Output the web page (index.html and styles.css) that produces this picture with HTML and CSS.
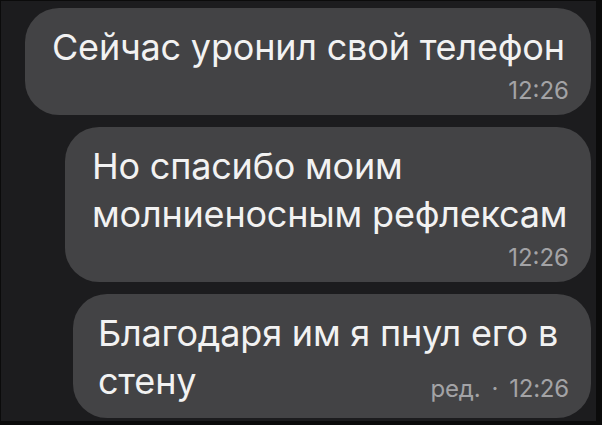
FILE: index.html
```html
<!DOCTYPE html>
<html lang="ru">
<head>
    <meta charset="UTF-8">
    <meta name="viewport" content="width=device-width, initial-scale=1.0">
    <title>Чат</title>
    <link rel="stylesheet" href="styles.css">
</head>
<body>

    <div class="screen">
        <div class="bubble b1">
            <div class="text">Сейчас уронил свой телефон</div>
            <div class="meta">12:26</div>
        </div>

        <div class="bubble b2">
            <div class="text">Но спасибо моим<br>молниеносным рефлексам</div>
            <div class="meta">12:26</div>
        </div>

        <div class="bubble b3">
            <div class="text">Благодаря им я пнул его в<br>стену<span class="meta inline">ред.<span class="dot">·</span>12:26</span></div>
        </div>
    </div>

</body>
</html>
```

FILE: styles.css
```css
* {
    margin: 0;
    padding: 0;
    box-sizing: border-box;
}

body {
    font-family: Inter, "Noto Sans", sans-serif;
    background-color: #0b0b0b;
    width: 602px;
    height: 425px;
    overflow: hidden;
}

.screen {
    margin: 1px 6px 0 1px;
    height: 420px;
    background-color: #1c1c1e;
    display: flex;
    flex-direction: column;
    align-items: flex-end;
    gap: 12px;
    padding: 7px 5px 0 0;
    overflow: hidden;
}

.bubble {
    background-color: #434345;
    border-radius: 34px;
    padding: 15px 22px 12px 27px;
    color: #f2f2f2;
}

.b1 { width: 566px; }
.b2 { width: 526px; }
.b3 { width: 518px; padding-left: 25px; padding-bottom: 13px; }

.text {
    font-size: 36px;
    line-height: 48px;
    letter-spacing: -0.2px;
    white-space: nowrap;
}

.meta {
    font-size: 24px;
    line-height: 24px;
    color: #a3a3a6;
    text-align: right;
    margin-top: 8px;
}

.meta.inline {
    float: right;
    margin-top: 20px;
}

.dot {
    margin: 0 11px;
}
```
